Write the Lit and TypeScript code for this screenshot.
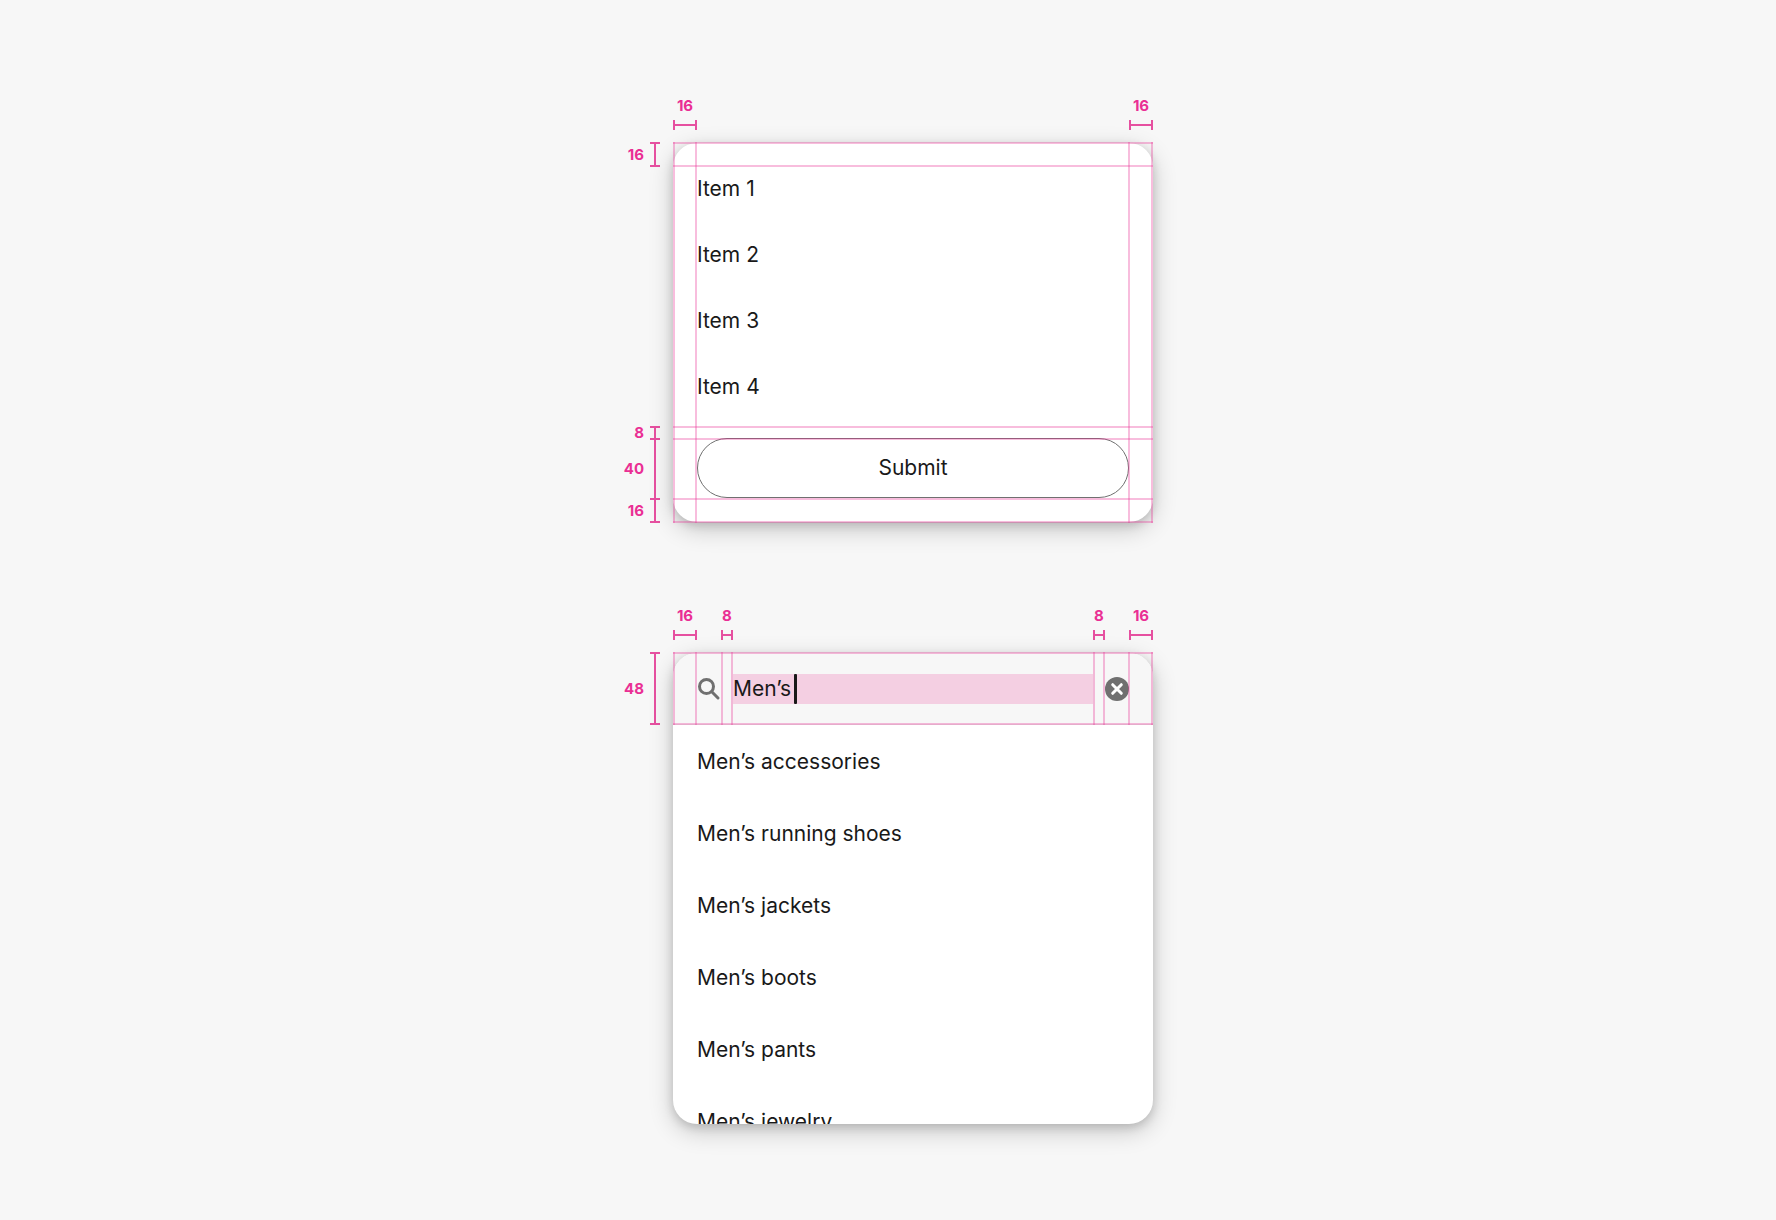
import { LitElement, html, css } from "lit";
import { customElement, property } from "lit/decorators.js";

interface Segment {
  size: number;
  label?: string;
}

/** A row or column of dimension brackets; segments without a label are blank spacers. */
@customElement("spacing-ruler")
class SpacingRuler extends LitElement {
  @property({ reflect: true }) axis: "x" | "y" = "x";
  @property({ attribute: false }) segments: Segment[] = [];

  static styles = css`
    :host {
      display: flex;
      color: #ea2f94;
      font: 700 15px/20px Inter, "Liberation Sans", sans-serif;
    }
    :host([axis="y"]) {
      flex-direction: column;
      margin-top: -1px;
    }
    .segment {
      display: flex;
      flex: none;
      box-sizing: border-box;
      align-items: center;
      justify-content: flex-end;
    }
    .blank {
      flex: 1 1 0;
    }
    :host([axis="x"]) .segment {
      flex-direction: column;
      gap: 4px;
    }
    :host([axis="y"]) .segment {
      gap: 6px;
      margin-bottom: -2px;
    }
    .bracket {
      box-sizing: border-box;
      flex: none;
      display: flex;
      align-items: center;
      justify-content: center;
      border: 0 solid #e650a0;
    }
    .bracket::before {
      content: "";
      background: #e650a0;
    }
    :host([axis="x"]) .bracket {
      width: 100%;
      height: 10px;
      border-width: 0 2px;
    }
    :host([axis="x"]) .bracket::before {
      width: 100%;
      height: 2px;
    }
    :host([axis="y"]) .bracket {
      width: 10px;
      height: 100%;
      border-width: 2px 0;
    }
    :host([axis="y"]) .bracket::before {
      width: 2px;
      height: 100%;
    }
  `;

  render() {
    const side = this.axis === "x" ? "width" : "height";
    return this.segments.map((s) =>
      s.label
        ? html`<div class="segment" style="${side}:${s.size}px">
            <span>${s.label}</span><span class="bracket"></span>
          </div>`
        : s.size
          ? html`<div style="flex:none;${side}:${s.size}px"></div>`
          : html`<div class="blank"></div>`
    );
  }
}

/** Guide lines laid over a card, placed from the left and right edges and from the top. */
@customElement("guide-lines")
class GuideLines extends LitElement {
  @property({ attribute: false }) left: number[] = [];
  @property({ attribute: false }) right: number[] = [];
  @property({ attribute: false }) rows: number[] = [];

  static styles = css`
    :host {
      position: absolute;
      inset: -1px 0;
      pointer-events: none;
    }
    .column,
    .row {
      position: absolute;
      background: rgba(232, 50, 148, 0.32);
    }
    .column {
      top: 0;
      bottom: 0;
      width: 2px;
    }
    .row {
      left: 0;
      right: 0;
      height: 2px;
    }
  `;

  render() {
    return html`
      ${this.left.map((x) => html`<span class="column" style="left:${x}px"></span>`)}
      ${this.right.map((x) => html`<span class="column" style="right:${x}px"></span>`)}
      ${this.rows.map((y) => html`<span class="row" style="top:${y}px"></span>`)}
    `;
  }
}

@customElement("app-root")
class AppRoot extends LitElement {
  static styles = css`
    :host {
      display: block;
      background: #f7f7f7;
      color: #191919;
      font: 400 21px/30px Inter, "Liberation Sans", sans-serif;
    }
    main {
      box-sizing: border-box;
      min-height: 100vh;
      padding: 96px 24px;
      display: flex;
      flex-direction: column;
      align-items: center;
      gap: 84px;
    }
    .spec {
      width: 100%;
      max-width: 530px;
      display: grid;
      grid-template-columns: 37px minmax(0, 1fr);
      gap: 13px;
    }
    .across {
      grid-column: 2;
    }
    .card {
      position: relative;
      border-radius: 24px;
      background: #fff;
      box-shadow: 0 3px 10px rgba(0, 0, 0, 0.15), 0 7px 25px rgba(0, 0, 0, 0.2);
    }
    ul {
      list-style: none;
      margin: 0;
      padding: 0;
    }
    .menu {
      padding: 24px;
    }
    .items {
      display: flex;
      flex-direction: column;
      gap: 22px;
      padding-bottom: 29px;
    }
    .items li {
      line-height: 44px;
    }
    .submit {
      display: block;
      width: 100%;
      height: 60px;
      border: 1px solid #707070;
      border-radius: 30px;
      background: #fff;
      color: inherit;
      font: inherit;
      padding: 0;
    }
    .suggest {
      display: flex;
      flex-direction: column;
    }
    .search {
      position: relative;
      display: flex;
      align-items: center;
      height: 71px;
      padding: 0 24px;
      border-bottom: 1px solid #e5e5e5;
      border-radius: 24px 24px 0 0;
      background: #f7f7f7;
    }
    .icon {
      flex: none;
      display: block;
      width: 24px;
      height: 24px;
    }
    .field {
      position: relative;
      flex: 1;
      min-width: 0;
      display: flex;
      margin: 0 12px;
    }
    .field input {
      width: 100%;
      height: 30px;
      padding: 0;
      border: 0;
      border-radius: 0;
      outline: 0;
      background: #f4cfe2;
      color: inherit;
      font: inherit;
    }
    .caret {
      position: absolute;
      left: 61px;
      top: 0;
      width: 3px;
      height: 30px;
      border-radius: 1px;
      background: #191919;
    }
    .clear {
      flex: none;
      padding: 0;
      border: 0;
      background: none;
    }
    .results {
      box-sizing: border-box;
      height: 399px;
      padding-top: 1px;
      overflow: hidden;
      border-radius: 0 0 24px 24px;
    }
    .results li {
      padding: 0 24px;
      line-height: 72px;
    }
  `;

  private items = ["Item 1", "Item 2", "Item 3", "Item 4"];
  private results = ["accessories", "running shoes", "jackets", "boots", "pants", "jewelry"];

  render() {
    return html`
      <main>
        <section class="spec">
          <spacing-ruler
            class="across"
            axis="x"
            .segments=${[{ size: 24, label: "16" }, { size: 0 }, { size: 24, label: "16" }]}
          ></spacing-ruler>
          <spacing-ruler
            axis="y"
            .segments=${[
              { size: 25, label: "16" },
              { size: 261 },
              { size: 14, label: "8" },
              { size: 62, label: "40" },
              { size: 25, label: "16" },
            ]}
          ></spacing-ruler>
          <div class="card menu">
            <ul class="items">
              ${this.items.map((item) => html`<li>${item}</li>`)}
            </ul>
            <button class="submit" type="button">Submit</button>
            <guide-lines .left=${[0, 22]} .right=${[0, 23]} .rows=${[0, 23, 284, 296, 356, 379]}></guide-lines>
          </div>
        </section>

        <section class="spec">
          <spacing-ruler
            class="across"
            axis="x"
            .segments=${[
              { size: 24, label: "16" },
              { size: 24 },
              { size: 12, label: "8" },
              { size: 0 },
              { size: 12, label: "8" },
              { size: 24 },
              { size: 24, label: "16" },
            ]}
          ></spacing-ruler>
          <spacing-ruler axis="y" .segments=${[{ size: 73, label: "48" }]}></spacing-ruler>
          <div class="card suggest">
            <div class="search">
              <svg class="icon" viewBox="0 0 24 24" fill="none" stroke="#707070" stroke-width="3" aria-hidden="true">
                <circle cx="9.5" cy="9.5" r="7" />
                <path d="M14.8 14.8 21 21" stroke-linecap="round" />
              </svg>
              <div class="field">
                <input type="text" aria-label="Search" .value=${"Men’s"} />
                <span class="caret"></span>
              </div>
              <button class="clear" type="button" aria-label="Clear search">
                <svg class="icon" viewBox="0 0 24 24" aria-hidden="true">
                  <circle cx="12" cy="12" r="12" fill="#707070" />
                  <path d="M7.7 7.7 16.3 16.3M16.3 7.7 7.7 16.3" stroke="#fff" stroke-width="3" stroke-linecap="round" />
                </svg>
              </button>
              <guide-lines .left=${[0, 22, 48, 58]} .right=${[0, 23, 48, 58]} .rows=${[0, 71]}></guide-lines>
            </div>
            <ul class="results">
              ${this.results.map((r) => html`<li>Men’s ${r}</li>`)}
            </ul>
          </div>
        </section>
      </main>
    `;
  }
}
